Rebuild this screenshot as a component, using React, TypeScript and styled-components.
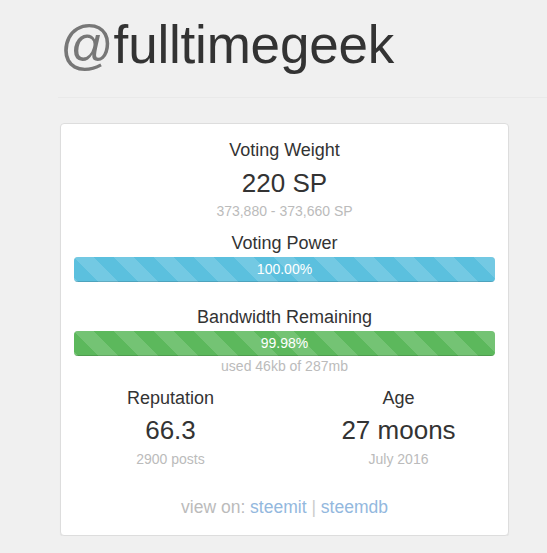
import React from "react"
import styled, {createGlobalStyle} from "styled-components"

const GlobalStyle = createGlobalStyle`
  html, body {
    margin: 0;
    padding: 0;
    background: #f0f0f0;
    font-family: "Liberation Sans", Arial, Helvetica, sans-serif;
    color: #333;
  }
`

type Bar = {
  label: string
  percent: number
  color: string
  note?: string
}

type Stat = {
  label: string
  value: string
  note: string
}

const bars: Bar[] = [
  {label: "Voting Power", percent: 100, color: "#5bc0de"},
  {
    label: "Bandwidth Remaining",
    percent: 99.98,
    color: "#5cb85c",
    note: "used 46kb of 287mb"
  }
]

const stats: Stat[] = [
  {label: "Reputation", value: "66.3", note: "2900 posts"},
  {label: "Age", value: "27 moons", note: "July 2016"}
]

const Page = styled.div`
  padding-top: 15px;
`

const Title = styled.h1`
  margin: 0 0 0 60px;
  font-size: 53px;
  line-height: 60px;
  font-weight: 400;
  color: #333;
  letter-spacing: -0.2px;
`

const At = styled.span`
  color: #777;
`

const Rule = styled.div`
  margin: 22px 0 0 58px;
  height: 1px;
  background: #e9e9e9;
`

const Card = styled.div`
  box-sizing: border-box;
  margin: 25px 0 0 60px;
  width: 449px;
  padding: 16px 13px 16px 13px;
  background: #fff;
  border: 1px solid #ddd;
  border-radius: 4px;
  box-shadow: 0 1px 1px rgba(0, 0, 0, 0.05);
  text-align: center;
`

const Heading = styled.div<{$gap?: number}>`
  margin-top: ${(p) => p.$gap ?? 0}px;
  font-size: 18px;
  line-height: 20px;
  color: #333;
`

const BigValue = styled.div<{$gap?: number}>`
  margin-top: ${(p) => p.$gap ?? 0}px;
  font-size: 26px;
  line-height: 30px;
  color: #333;
`

const Muted = styled.div<{$gap?: number}>`
  margin-top: ${(p) => p.$gap ?? 0}px;
  font-size: 14px;
  line-height: 20px;
  color: #bbb;
`

const Track = styled.div`
  margin-top: 4px;
  height: 25px;
  border-radius: 4px;
  overflow: hidden;
  background: #f5f5f5;
  box-shadow: inset 0 1px 2px rgba(0, 0, 0, 0.1);
`

const Fill = styled.div<{$color: string}>`
  height: 100%;
  background-color: ${(p) => p.$color};
  background-image: linear-gradient(
    45deg,
    rgba(255, 255, 255, 0.15) 25%,
    transparent 25%,
    transparent 50%,
    rgba(255, 255, 255, 0.15) 50%,
    rgba(255, 255, 255, 0.15) 75%,
    transparent 75%,
    transparent
  );
  background-size: 40px 40px;
  box-shadow: inset 0 -1px 0 rgba(0, 0, 0, 0.15);
  color: #fff;
  font-size: 14px;
  line-height: 25px;
  text-align: center;
  white-space: nowrap;
`

const BarBlock = styled.div<{$gap: number}>`
  margin-top: ${(p) => p.$gap}px;
`

const Stats = styled.div`
  display: grid;
  grid-template-columns: 228px 228px;
  justify-content: center;
  margin: 12px -20px 0;
`

const StatCol = styled.div`
  display: flex;
  flex-direction: column;
  align-items: center;
`

const ViewOn = styled.div`
  margin-top: 26px;
  font-size: 17.5px;
  line-height: 24px;
  color: #bbb;
`

const Link = styled.a`
  color: #93b8de;
  text-decoration: none;
`

const Pipe = styled.span`
  color: #ccc;
`

export default function App() {
  return (
    <Page>
      <GlobalStyle />
      <Title>
        <At>@</At>fulltimegeek
      </Title>
      <Rule />
      <Card>
        <Heading>Voting Weight</Heading>
        <BigValue $gap={8}>220 SP</BigValue>
        <Muted $gap={3}>373,880 - 373,660 SP</Muted>
        {bars.map((bar, i) => (
          <BarBlock key={bar.label} $gap={i === 0 ? 12 : 25}>
            <Heading>{bar.label}</Heading>
            <Track>
              <Fill $color={bar.color} style={{width: `${bar.percent}%`}}>
                {bar.percent.toFixed(2)}%
              </Fill>
            </Track>
            {bar.note && <Muted>{bar.note}</Muted>}
          </BarBlock>
        ))}
        <Stats>
          {stats.map((s) => (
            <StatCol key={s.label}>
              <Heading>{s.label}</Heading>
              <BigValue $gap={7}>{s.value}</BigValue>
              <Muted $gap={4}>{s.note}</Muted>
            </StatCol>
          ))}
        </Stats>
        <ViewOn>
          view on: <Link href="#">steemit</Link> <Pipe>|</Pipe>{" "}
          <Link href="#">steemdb</Link>
        </ViewOn>
      </Card>
    </Page>
  )
}
